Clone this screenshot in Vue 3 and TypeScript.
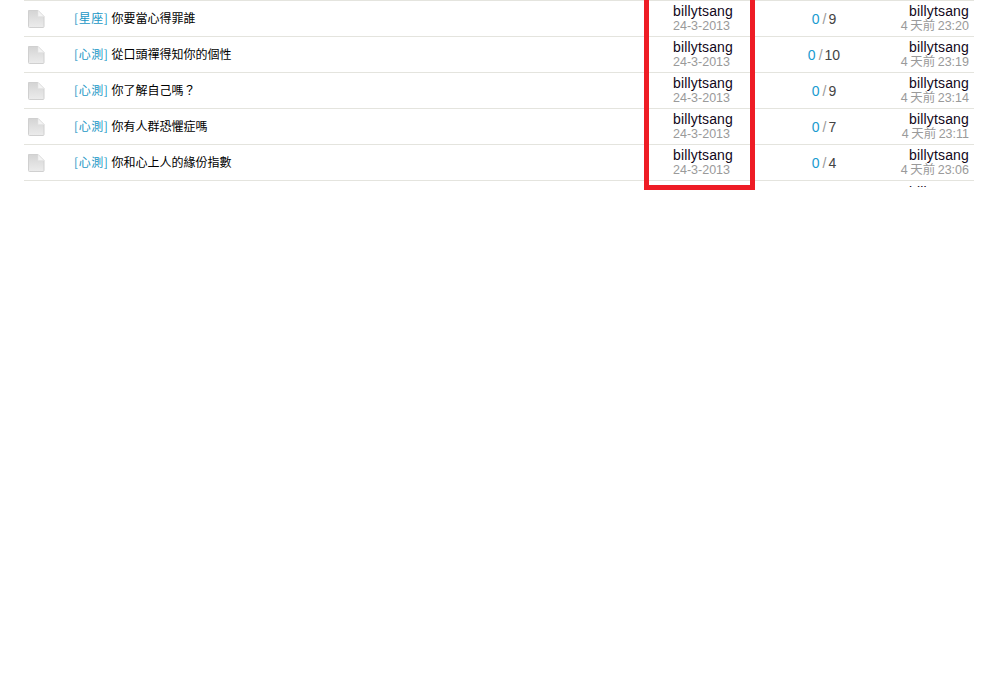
<script setup lang="ts">
interface Row { tag: string; title: string; replies: number; time: string }
const rows: Row[] = [
  { tag: '[星座]', title: '你要當心得罪誰', replies: 9, time: '4 天前 23:20' },
  { tag: '[心測]', title: '從口頭禪得知你的個性', replies: 10, time: '4 天前 23:19' },
  { tag: '[心測]', title: '你了解自己嗎？', replies: 9, time: '4 天前 23:14' },
  { tag: '[心測]', title: '你有人群恐懼症嗎', replies: 7, time: '4 天前 23:11' },
  { tag: '[心測]', title: '你和心上人的緣份指數', replies: 4, time: '4 天前 23:06' },
]
</script>

<template>
  <div class="page">
    <div class="table">
      <div v-for="r in rows" :key="r.title" class="row">
        <div class="icon">
          <svg width="18" height="18" viewBox="0 0 18 18">
            <defs>
              <linearGradient id="doc" x1="0" y1="0" x2="0" y2="1">
                <stop offset="0" stop-color="#d4d4d4" />
                <stop offset="1" stop-color="#ececec" />
              </linearGradient>
            </defs>
            <path d="M1.500 0.500H11L17 6.500V16.500Q17 17.500 16 17.500H2.500Q1.500 17.500 1.500 16.500Z" fill="url(#doc)" stroke="#d0d0d0" stroke-width="1" />
            <path d="M11 0.500V6.500H17Z" fill="#f4f4f4" stroke="#e2e2e2" stroke-width="0.500" />
          </svg>
        </div>
        <div class="subject"><a class="tag">{{ r.tag }}</a><span class="title">{{ r.title }}</span></div>
        <div class="author">
          <div class="name">billytsang</div>
          <div class="sub">24-3-2013</div>
        </div>
        <div class="count"><span class="zero">0</span><span class="slash">/</span><span class="num">{{ r.replies }}</span></div>
        <div class="last">
          <div class="name">billytsang</div>
          <div class="sub time">{{ r.time }}</div>
        </div>
      </div>
      <div class="stub"><div class="name">billytsang</div></div>
    </div>
    <div class="highlight"></div>
  </div>
</template>

<style>
html, body { background: #fff; }
</style>

<style scoped>
.page {
  position: relative;
  height: 691px;
  overflow: hidden;
  background: #fff;
  font-family: "Liberation Sans", Arial, "Noto Sans CJK TC", sans-serif;
}
.table {
  margin: 0 24px;
  width: 950px;
  border-top: 1px solid #e4e4de;
}
.row {
  display: flex;
  height: 35px;
  border-bottom: 1px solid #e4e4de;
  overflow: hidden;
}
.icon {
  width: 50px;
  padding: 9px 0 0 3px;
  box-sizing: border-box;
  flex: none;
}
.icon svg { display: block; }
.subject {
  width: 570px;
  flex: none;
  font-size: 12px;
  line-height: 34px;
  font-family: "Noto Sans CJK TC", sans-serif;
}
.tag {
  color: #1a97c5;
  letter-spacing: 0.6px;
  margin-right: 3px;
}
.title { color: #000; }
.author {
  width: 130px;
  flex: none;
  padding-left: 29px;
  box-sizing: border-box;
}
.name {
  font-size: 14px;
  line-height: 15px;
  padding-top: 3px;
  color: #12071a;
  letter-spacing: 0.16px;
}
.sub {
  font-size: 12.500px;
  line-height: 14px;
  color: #9a9a9a;
  font-family: "Liberation Sans", "Noto Sans CJK TC", sans-serif;
}
.time { word-spacing: -1px; }
.count {
  width: 100px;
  flex: none;
  text-align: center;
  font-size: 14px;
  line-height: 36px;
  color: #444;
}
.zero { color: #1a9bd0; }
.slash { color: #999; margin: 0 2px 0 3px; }
.last {
  flex: 1;
  text-align: right;
  padding-right: 5px;
}
.stub {
  height: 6px;
  overflow: hidden;
  text-align: right;
  padding-right: 5px;
}
.stub .name { padding-top: 4px; }
.highlight {
  position: absolute;
  left: 644px;
  top: -10px;
  width: 101px;
  height: 190px;
  border: 5px solid #ee1c25;
}
</style>
